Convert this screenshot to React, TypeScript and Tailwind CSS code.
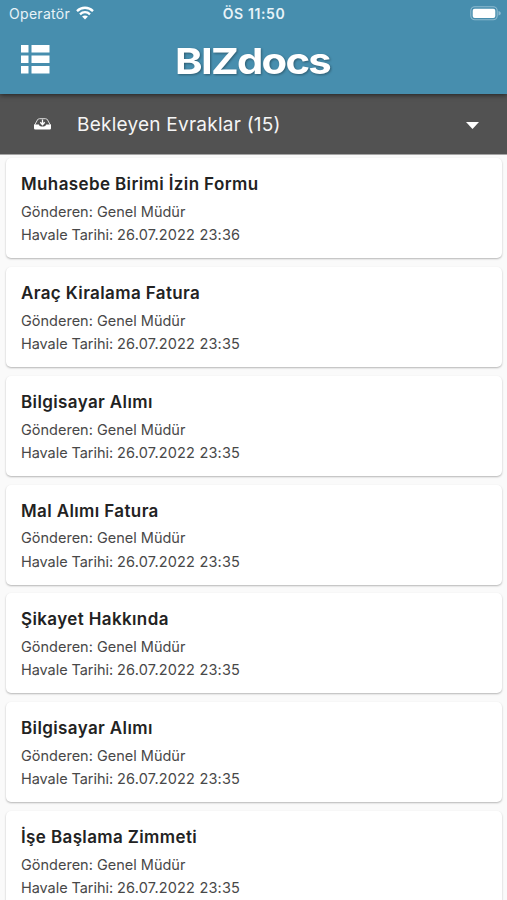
type Doc = { title: string; time: string };

const docs: Doc[] = [
  { title: "Muhasebe Birimi İzin Formu", time: "23:36" },
  { title: "Araç Kiralama Fatura", time: "23:35" },
  { title: "Bilgisayar Alımı", time: "23:35" },
  { title: "Mal Alımı Fatura", time: "23:35" },
  { title: "Şikayet Hakkında", time: "23:35" },
  { title: "Bilgisayar Alımı", time: "23:35" },
  { title: "İşe Başlama Zimmeti", time: "23:35" },
];

function StatusBar() {
  return (
    <div className="grid h-7 grid-cols-[1fr_auto_1fr] items-center pr-[6px] pl-[9px] text-[14px] leading-7 text-[#e8f3f8]">
      <div className="flex items-center gap-[6px]">
        <span className="tracking-[0.3px]">Operatör</span>
        <svg className="-mt-[2px]" width="18" height="14" viewBox="0 0 18 14" fill="none" stroke="white" strokeWidth="2.3">
          <path d="M1 5.1C5.5.6 12.500.6 17 5.100" />
          <path d="M4 8.300C6.900 5.500 11.100 5.500 14 8.300" />
          <path d="M6.100 10.500C7.800 9 10.200 9 11.900 10.500L9 13.500Z" fill="white" stroke="none" />
        </svg>
      </div>
      <span className="-ml-[2px] font-semibold tracking-[0.6px]">ÖS 11:50</span>
      <svg className="-mt-[2px] justify-self-end" width="31" height="15" viewBox="0 0 31 15">
        <rect x="0.8" y="0.8" width="26.400" height="13" rx="4" fill="none" stroke="#8dbad0" strokeWidth="1.100" />
        <rect x="2.700" y="2.700" width="22.600" height="9.200" rx="2" fill="white" />
        <path d="M28.500 5v4.600c1.800-.6 2.300-1.400 2.300-2.300S30.300 5.600 28.500 5Z" fill="#8dbad0" />
      </svg>
    </div>
  );
}

function Header() {
  return (
    <header className="relative z-10 h-[94px] shrink-0 bg-[#478eae] shadow-[0_1px_5px_rgba(0,0,0,0.6)]">
      <StatusBar />
      <div className="flex items-center pl-[21px]">
        <svg className="mt-px" width="29" height="62" viewBox="0 0 29 62" fill="white">
          <path d="M0 16h7.500v7.500H0zM10.500 16h18v7.500h-18zM0 26.500h7.500v7.500H0zM10.500 26.500h18v7.500h-18zM0 37h7.500v7.500H0zM10.500 37h18v7.500h-18z" />
        </svg>
        <svg className="ml-[125px]" width="160" height="60" viewBox="0 0 160 60" role="img" aria-label="BIZdocs">
          <text
            x="0"
            y="43.500"
            textLength="155"
            lengthAdjust="spacingAndGlyphs"
            className="fill-white font-['Inter',sans-serif] text-[36px] font-bold tracking-[-1.5px] drop-shadow-[1px_1px_1px_rgba(0,0,0,0.35)]"
          >
            BIZdocs
          </text>
        </svg>
      </div>
    </header>
  );
}

function FolderBar() {
  return (
    <div className="flex h-[61px] shrink-0 items-center border-b border-[#a5a5a5] bg-[#525252] pl-[34px] text-white">
      <svg className="-mt-px" width="17" height="12" viewBox="0 0 17 12">
        <path d="M.6 7.200 3.400 2Q4 .7 5.500.7h6Q13 .7 13.600 2l2.800 5.200" fill="none" stroke="#ddd" strokeWidth="1" />
        <path d="M0 6.600h4.800c.5 1.500 1.500 2 3.700 2s3.200-.5 3.700-2H17v3.700q0 1.200-1.200 1.200H1.200Q0 11.500 0 10.300Z" fill="white" />
        <path d="M8.500 1.500v4M6.300 4.200l2.200 2.500 2.200-2.500" fill="none" stroke="white" strokeWidth="1.300" />
      </svg>
      <span className="mt-[2px] ml-[26px] text-[19px] tracking-[0.240px] text-[#f5f5f5]">Bekleyen Evraklar (15)</span>
      <svg className="mt-[2px] mr-[28px] ml-auto" width="13" height="7" viewBox="0 0 13 7" fill="white">
        <path d="M0 0h13L6.500 7Z" />
      </svg>
    </div>
  );
}

function DocCard({ title, time }: Doc) {
  return (
    <li className="h-[100px] shrink-0 rounded-[5px] bg-white px-[15px] pt-[14px] whitespace-nowrap shadow-[0_1px_2px_rgba(0,0,0,0.28)]">
      <h2 className="text-[17px] leading-6 font-semibold tracking-[0.380px] text-[#222]">{title}</h2>
      <p className="mt-[3.700px] text-[14.500px] leading-[23.300px] text-[#484848]">Gönderen: Genel Müdür</p>
      <p className="text-[14.500px] leading-[23.300px] text-[#484848]">
        <span className="tracking-[-0.060px]">Havale Tarihi: </span>
        <span className="tracking-[0.180px]">26.07.2022 {time}</span>
      </p>
    </li>
  );
}

export default function App() {
  return (
    <div className="flex h-[900px] w-full flex-col overflow-hidden bg-[#fafafa] font-['Inter',sans-serif]">
      <Header />
      <FolderBar />
      <main className="min-h-0 flex-1 overflow-hidden pt-[3.400px] pr-[5px] pl-[6px]">
        <ul className="flex flex-col gap-[8.750px]">
          {docs.map((doc, i) => (
            <DocCard key={i} {...doc} />
          ))}
        </ul>
      </main>
    </div>
  );
}
